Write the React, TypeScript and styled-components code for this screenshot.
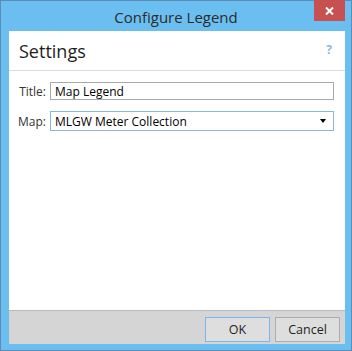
import React from 'react'
import styled, { createGlobalStyle } from 'styled-components'

const GlobalStyle = createGlobalStyle`
  html, body {
    margin: 0;
    padding: 0;
    background: #ffffff;
  }
  body {
    font-family: "Open Sans", "Noto Sans", sans-serif;
  }
`

const Window = styled.div`
  position: relative;
  box-sizing: border-box;
  width: 352px;
  height: 351px;
  border: 1px solid #5c8db6;
  background: #6bbff0;
  padding: 0 6px 6px 8px;
  display: flex;
  flex-direction: column;
`

const TitleBar = styled.div`
  height: 30px;
  flex: none;
  display: flex;
  align-items: center;
  justify-content: center;
  margin-left: -8px;
  margin-right: -6px;
`

const Caption = styled.span`
  font-size: 15px;
  color: #2b2b2b;
  margin-top: 1px;
`

const CloseButton = styled.div`
  position: absolute;
  top: -1px;
  right: 6px;
  width: 31px;
  height: 21px;
  background: #c75050;
  display: flex;
  align-items: center;
  justify-content: center;
`

const Client = styled.div`
  flex: 1;
  background: #ffffff;
  display: flex;
  flex-direction: column;
`

const Header = styled.div`
  height: 39px;
  flex: none;
  display: flex;
  align-items: center;
  justify-content: space-between;
  padding: 0 13px 0 10px;
  border-bottom: 1px solid #dcdcdc;
`

const Heading = styled.h2`
  margin: 0;
  font-size: 18px;
  font-weight: 400;
  color: #1e1e1e;
`

const Help = styled.span`
  font-size: 12px;
  font-weight: 700;
  color: #8fb6e3;
  margin-top: -2px;
`

const Form = styled.div`
  flex: 1;
  display: grid;
  grid-template-columns: 31px 1fr;
  column-gap: 4px;
  row-gap: 11px;
  align-content: start;
  padding: 11px 11px 0 6px;
`

const Label = styled.label`
  font-size: 12px;
  color: #333333;
  text-align: right;
  align-self: center;
`

const TextBox = styled.div<{ $focused?: boolean }>`
  box-sizing: border-box;
  height: ${p => (p.$focused ? 20 : 18)}px;
  border: 1px solid ${p => (p.$focused ? '#86b7e8' : '#a9a9a9')};
  padding: 0 4px;
  font-size: 12px;
  color: #000000;
  display: flex;
  align-items: center;
  justify-content: space-between;
`

const Arrow = styled.span`
  width: 0;
  height: 0;
  border-left: 3.5px solid transparent;
  border-right: 3.5px solid transparent;
  border-top: 4px solid #000000;
  margin-right: 3px;
`

const Footer = styled.div`
  height: 34px;
  flex: none;
  border-top: 1px solid #b9b9b9;
  background: #d5d5d5;
  display: flex;
  justify-content: flex-end;
  align-items: flex-start;
  gap: 5px;
  padding: 6px 5px 0 0;
  box-sizing: border-box;
`

const Button = styled.button<{ $default?: boolean }>`
  box-sizing: border-box;
  width: 65px;
  height: 25px;
  border: 1px solid ${p => (p.$default ? '#7db5ea' : '#acacac')};
  background: #dedede;
  font-family: inherit;
  font-size: 12.5px;
  color: #1f1f1f;
  padding: 0;
`

export default function App() {
  return (
    <>
      <GlobalStyle />
      <Window>
        <TitleBar>
          <Caption>Configure Legend</Caption>
        </TitleBar>
        <CloseButton>
          <svg width="9" height="8" viewBox="0 0 9 8">
            <path d="M1 0.5 L8 7.5 M8 0.5 L1 7.5" stroke="#ffffff" strokeWidth="2" />
          </svg>
        </CloseButton>
        <Client>
          <Header>
            <Heading>Settings</Heading>
            <Help>?</Help>
          </Header>
          <Form>
            <Label>Title:</Label>
            <TextBox>Map Legend</TextBox>
            <Label>Map:</Label>
            <TextBox $focused>
              MLGW Meter Collection
              <Arrow />
            </TextBox>
          </Form>
          <Footer>
            <Button $default>OK</Button>
            <Button>Cancel</Button>
          </Footer>
        </Client>
      </Window>
    </>
  )
}
